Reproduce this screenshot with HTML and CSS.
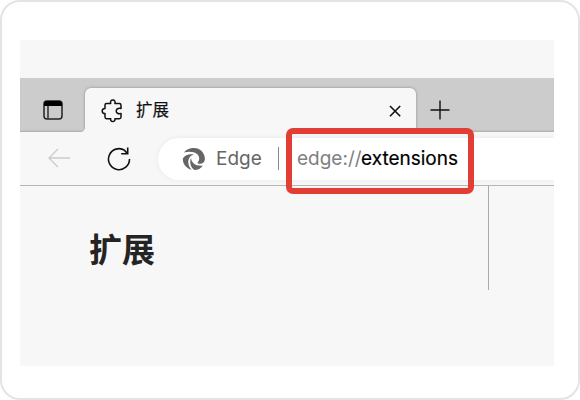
FILE: index.html
```html
<!DOCTYPE html>
<html lang="zh-CN">
<head>
<meta charset="utf-8">
<title>扩展</title>
<link rel="stylesheet" href="styles.css">
</head>
<body>
<main class="card">
  <div class="browser">
    <div class="tabstrip">
      <svg class="workspace" width="22" height="22" viewBox="0 0 22 22">
        <rect x="2" y="2" width="18" height="18" rx="3" fill="none" stroke="#222" stroke-width="1.5"/>
        <path d="M2 7V5q0-3 3-3h12q3 0 3 3v2z"/>
        <path d="M6 7v12.500" stroke="#222" stroke-width="1.4"/>
      </svg>
      <div class="tab">
        <svg class="puzzle" width="24" height="26" viewBox="0 0 24 26">
          <path d="M5.500 5.500h4.200C9 3.200 10.200 2 11.800 2s2.800 1.200 2.100 3.500H18.300q1.700 0 1.700 1.700V10.500C17 9.900 15.200 11 15.200 13s1.800 3.100 4.800 2.500V19q0 1.700-1.700 1.700H13.900C14.400 22.400 13.200 23.500 11.800 23.500s-2.600-1.100-2.100-2.800H5.500Q4 20.700 4 19V15.600C2.200 15.600 1.200 14.500 1.200 13S2.200 10.400 4 10.400V7q0-1.500 1.500-1.500z" fill="none" stroke="#111" stroke-width="1.5" stroke-linejoin="round"/>
        </svg>
        <span class="tab-title">扩展</span>
        <svg class="close" width="14" height="14" viewBox="0 0 14 14"><path d="M2 2l10.200 10.200M12.200 2L2 12.200" fill="none" stroke="#111" stroke-width="1.6"/></svg>
      </div>
      <svg class="plus" width="20" height="20" viewBox="0 0 20 20"><path d="M10 .5v19M.5 10h19" fill="none" stroke="#111" stroke-width="1.4"/></svg>
    </div>
    <div class="toolbar">
      <svg class="back" width="24" height="22" viewBox="0 0 24 22"><path d="M11 2L2 11l9 9M2 11h21" fill="none" stroke="#ccc" stroke-width="1.4"/></svg>
      <svg class="reload" width="26" height="26" viewBox="0 0 26 26"><path d="M18.800 4.400A10.500 10.500 0 1 0 23.500 13M21.700 1.500v6.300h-6.500M21.600 7.700L18.300 4.100" fill="none" stroke="#111" stroke-width="1.600"/></svg>
      <div class="address">
        <svg class="logo" width="24" height="24" viewBox="0 0 24 24">
          <g fill="#666">
            <path d="M2 5.500C5 1.500 9 .8 12 .9 18 1 22.800 5.500 22.900 11.500 23 15 20.500 17 17 16.800 15.500 16.600 15.200 15.900 16 15 18 12.500 17.500 9 15 7 12 4.500 7 4.200 2 5.500z"/>
            <path d="M.8 11.500C3.500 7.800 7.500 6.600 12 7.800 8.500 8.300 6 11.500 6.300 15.500 6.500 18.500 7.800 21 9.500 22.800 4.500 21.500.6 17 .8 11.500z"/>
            <path d="M9 11C9.500 15.500 13 19.200 20.800 18.700 18.800 21.500 16 22.900 12.500 23 8.500 20.500 7.300 15 9 11z"/>
          </g>
        </svg>
        <span class="engine">Edge</span>
        <span class="divider"></span>
        <span class="scheme">edge://</span><span class="path">extensions</span>
      </div>
    </div>
    <div class="content">
      <h1 class="heading">扩展</h1>
      <div class="sidebar-edge"></div>
    </div>
    <div class="highlight"></div>
  </div>
</main>
</body>
</html>
```
FILE: styles.css
```css
* { box-sizing: border-box; }
body { margin: 0; background: #fff; font-family: Inter, "Noto Sans CJK SC", sans-serif; }
svg { display: block; flex: none; }
.card {
  width: 580px;
  height: 400px;
  padding: 38px 24px 32px 18px;
  border: 2px solid #e4e4e4;
  border-radius: 20px;
  background: #fff;
}
.browser {
  position: relative;
  height: 326px;
  padding-top: 38px;
  background: #f7f7f7;
  overflow: hidden;
}
.tabstrip {
  display: flex;
  height: 54px;
  padding-left: 22px;
  background: #ccc;
  box-shadow: inset 0 -2px 2px -1px #aaa;
}
.workspace { margin-top: 21px; }
.tab {
  position: relative;
  display: flex;
  align-items: center;
  width: 331px;
  height: 44px;
  margin: 10px 0 0 21px;
  padding: 0 14px 0 16px;
  border-radius: 6px 6px 0 0;
  background: #f7f7f7;
  box-shadow: 0 0 3px #888;
  clip-path: inset(-4px -4px 0 -4px);
}
.tab::before {
  content: "";
  position: absolute;
  left: -4px;
  bottom: 0;
  width: 4px;
  height: 4px;
  background: radial-gradient(circle at 0 0, transparent 3.5px, #f7f7f7 4px);
}
.puzzle { margin-top: 1px; }
.tab-title { margin-left: 11px; color: #111; font-size: 16.500px; font-weight: 400; line-height: 24px; white-space: nowrap; -webkit-text-stroke: 0.2px #111; }
.close { margin: 2px 0 0 auto; }
.plus { margin: 22px 0 0 14px; }
.toolbar {
  display: flex;
  align-items: center;
  height: 54px;
  padding-left: 27px;
  background: #f7f7f7;
  border-bottom: 1px solid #b5b5b5;
}
.back { margin-top: -1px; }
.reload { margin-left: 35px; }
.address {
  display: flex;
  align-items: center;
  flex: 1;
  height: 42px;
  margin-left: 26px;
  padding-left: 24px;
  border-radius: 21px 0 0 21px;
  background: #fff;
  box-shadow: 0 0 5px #e8e8e8;
  font-size: 19px;
  line-height: 24px;
  white-space: nowrap;
}
.engine { width: 46px; margin-left: 10px; padding-top: 1px; color: #666; }
.divider { width: 1px; height: 23px; margin: 0 18px 0 16px; background: #888; }
.scheme { width: 64px; padding-top: 1px; color: #808080; }
.path { padding-top: 1px; color: #000; -webkit-text-stroke: 0.2px #000; }
.content { display: flex; justify-content: space-between; height: 180px; padding: 0 65px 0 69px; }
.heading { margin: 40px 0 0; color: #242424; font-size: 33px; font-weight: 700; line-height: 48px; }
.sidebar-edge { width: 1px; height: 104px; background: #aaa; }
.highlight {
  position: absolute;
  left: 266px;
  top: 88px;
  width: 188px;
  height: 66px;
  border: 6px solid #e33e35;
  border-radius: 7px;
}
```
